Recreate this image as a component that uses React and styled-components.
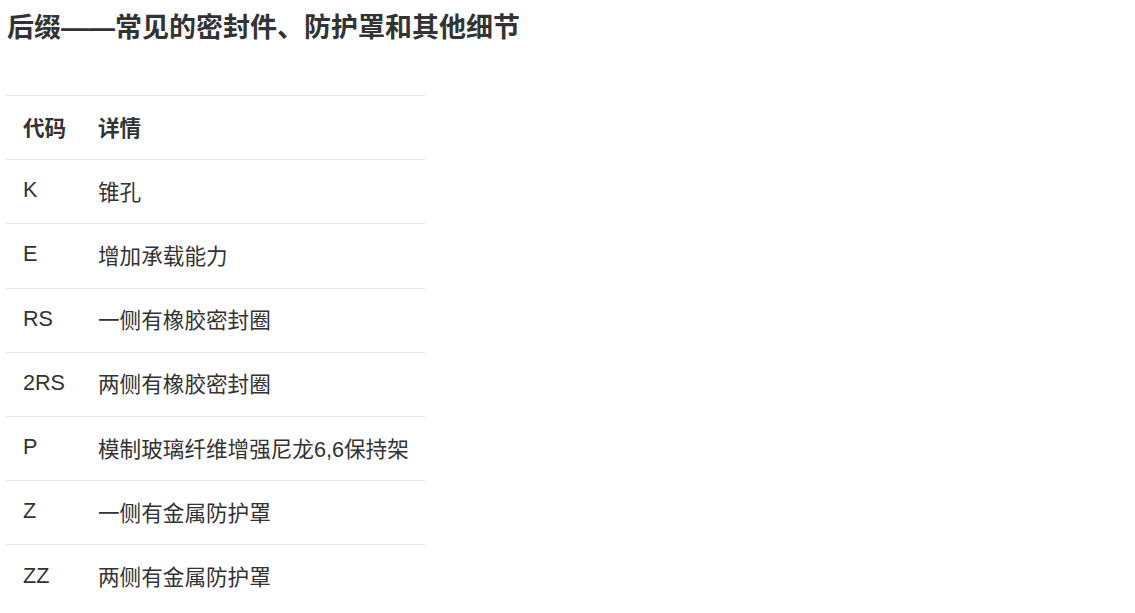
import React from "react";
import styled, { createGlobalStyle } from "styled-components";

const GlobalStyle = createGlobalStyle`
  body {
    margin: 0;
    background: #fff;
    color: #333;
    font-family: "Liberation Sans", "Noto Sans CJK SC", sans-serif;
  }
`;

const Page = styled.div`
  padding: 10px 6px;
`;

const Title = styled.h2`
  margin: 0 0 0 1px;
  font-size: 27px;
  line-height: 36px;
  font-weight: 700;
  color: #333;
`;

const Table = styled.table`
  margin-top: 49px;
  width: 419px;
  border-collapse: collapse;
`;

const Row = styled.tr`
  height: 64.2px;
  border-top: 1px solid #e5e5e5;
`;

const Cell = styled.td`
  padding: 0 0 3px 17px;
  vertical-align: middle;
  text-align: left;
  font-size: 21.6px;
  color: #333;
  font-weight: ${(p) => (p.$head ? 700 : 400)};
  width: ${(p) => (p.$code ? "58px" : "auto")};
`;

const rows = [
  ["K", "锥孔"],
  ["E", "增加承载能力"],
  ["RS", "一侧有橡胶密封圈"],
  ["2RS", "两侧有橡胶密封圈"],
  ["P", "模制玻璃纤维增强尼龙6,6保持架"],
  ["Z", "一侧有金属防护罩"],
  ["ZZ", "两侧有金属防护罩"],
];

const App = () => {
  return (
    <Page>
      <GlobalStyle />
      <Title>后缀——常见的密封件、防护罩和其他细节</Title>
      <Table>
        <tbody>
          <Row>
            <Cell as="th" $head $code>代码</Cell>
            <Cell as="th" $head>详情</Cell>
          </Row>
          {rows.map(([code, detail]) => (
            <Row key={code}>
              <Cell $code>{code}</Cell>
              <Cell>{detail}</Cell>
            </Row>
          ))}
        </tbody>
      </Table>
    </Page>
  );
};

export default App;
